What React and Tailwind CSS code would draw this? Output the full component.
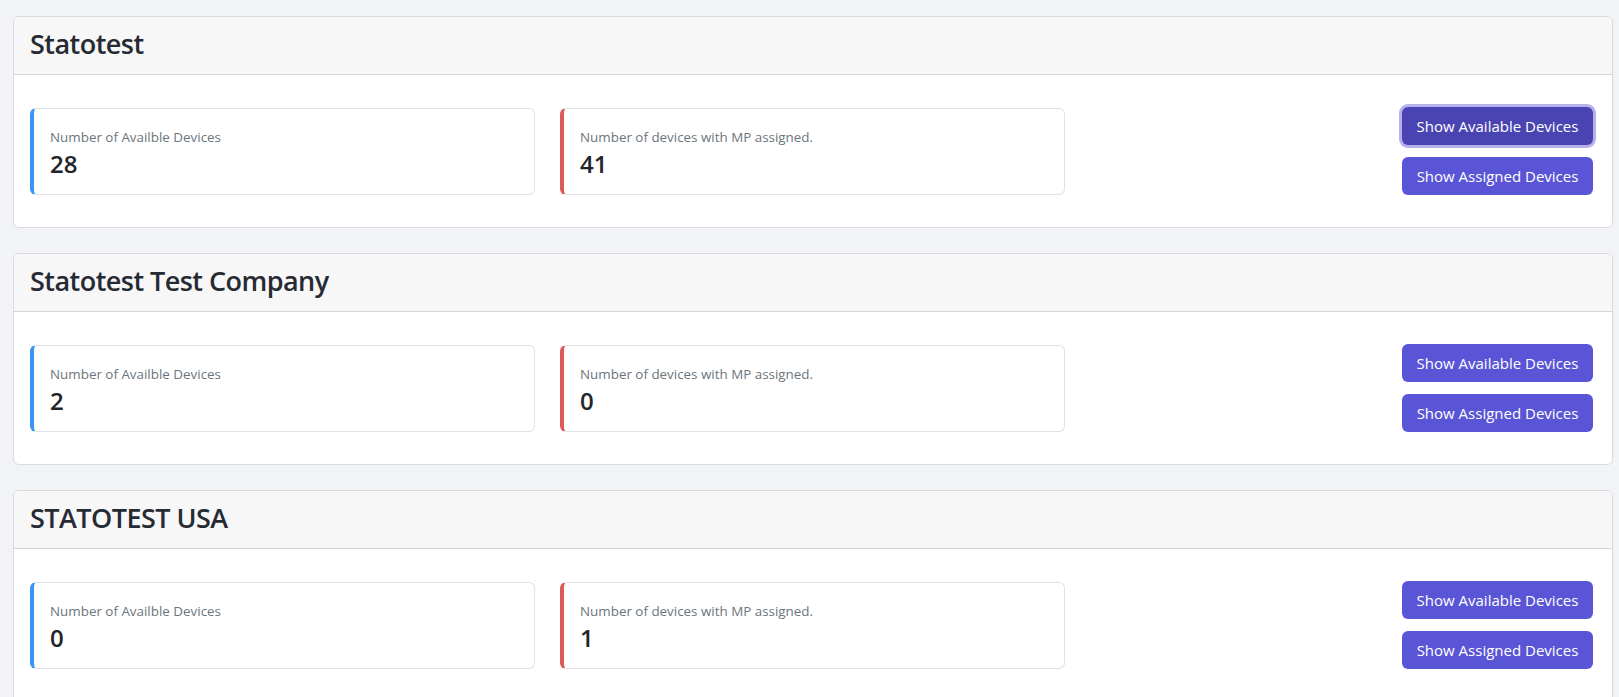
import React from "react";

const companies = [
  { name: "Statotest", available: 28, assigned: 41, active: true },
  { name: "Statotest Test Company", available: 2, assigned: 0 },
  { name: "STATOTEST USA", available: 0, assigned: 1 },
];

function StatBox({ label, value, color, className = "" }) {
  return (
    <div
      className={`w-[505px] h-[87px] bg-white border border-[#dee2e6] border-l-4 rounded-[6px] pl-[16px] pt-[19px] ${color} ${className}`}
    >
      <div className="text-[13.4px] leading-[18px] text-[#6c757d]">{label}</div>
      <div className="mt-[4px] text-[24px] leading-[28px] font-semibold text-[#212529]">{value}</div>
    </div>
  );
}

function Card({ name, available, assigned, active }) {
  return (
    <div className="bg-white border border-[#d9dadd] rounded-[6px] overflow-hidden">
      <div className="h-[58px] bg-[#f7f7f8] border-b border-[#d4d5d8] px-[16px] flex items-center">
        <h3 className="text-[27px] leading-[34px] tracking-[-0.02em] font-semibold text-[#262b33] -mt-[3px]">
          {name}
        </h3>
      </div>
      <div className="px-[16px] py-[32px] flex items-center">
        <StatBox label="Number of Availble Devices" value={available} color="border-l-[#3b95f2]" />
        <StatBox
          label="Number of devices with MP assigned."
          value={assigned}
          color="border-l-[#dc5a5a]"
          className="ml-[25px]"
        />
        <div className="ml-auto mr-[3px] flex flex-col gap-[12px] w-[191px]">
          <button
            className={`h-[38px] w-full rounded-[6px] text-white text-[15px] ${
              active ? "bg-[#4a44b3] shadow-[0_0_0_3px_#b5b1ea]" : "bg-[#5955d6]"
            }`}
          >
            Show Available Devices
          </button>
          <button className="h-[38px] w-full rounded-[6px] text-white text-[15px] bg-[#5955d6]">
            Show Assigned Devices
          </button>
        </div>
      </div>
    </div>
  );
}

export default function App() {
  return (
    <div
      className="min-h-screen bg-[#f2f3f7] pt-[16px] pl-[13px] pr-[6px] flex flex-col gap-[25px]"
      style={{ fontFamily: '"Open Sans", "Noto Sans", sans-serif' }}
    >
      {companies.map((c) => (
        <Card key={c.name} {...c} />
      ))}
    </div>
  );
}
